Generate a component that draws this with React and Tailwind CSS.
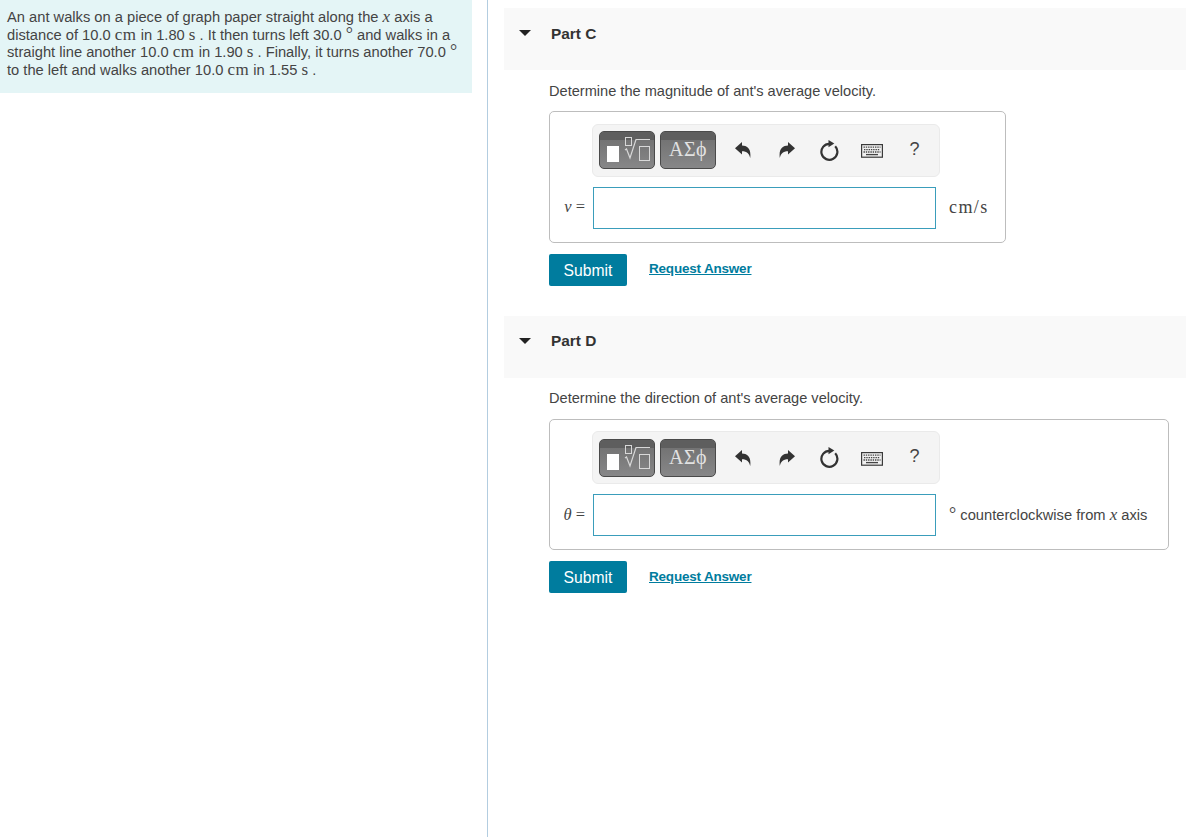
const serif = "font-['Liberation_Serif',serif]";

const Cm = () => <span className={`${serif} text-[17px] leading-[0] tracking-[0.5px]`}>cm</span>;
const Sec = () => <span className={`${serif} text-[17px] leading-[0]`}>s</span>;
const MathX = () => <span className={`${serif} italic text-[17px] leading-[0]`}>x</span>;
const Deg = () => <span className={`${serif} text-[18px] leading-[0]`}>°</span>;

const Undo = ({ flip }) => (
  <svg width="16" height="16" viewBox="0 0 16 16" className={flip ? "-scale-x-100" : ""}>
    <path d="M0 6.2L7 0v3.6C12.4 3.6 16.4 7 15.2 16 14.2 11.4 12 9.2 7 9.2v3.4z" fill="#333" />
  </svg>
);

const Reload = () => (
  <svg width="19" height="21" viewBox="0 0 19 21" fill="none">
    <path d="M15.2 6.3A8 8 0 1 1 9.5 3.8" stroke="#333" strokeWidth="2.2" />
    <path d="M8.5 0l5.8 3.6-5.8 3.6z" fill="#333" />
  </svg>
);

const Keyboard = () => (
  <svg width="22" height="14" viewBox="0 0 22 14">
    <rect x="0.6" y="0.6" width="20.8" height="12.6" fill="#f0f0f0" stroke="#3a3a3a" strokeWidth="1.2" />
    <path d="M2.5 3.2h17M3 5.6h16M2.5 8h17" stroke="#444" strokeWidth="1.3" strokeDasharray="1.4 0.9" />
    <path d="M5 10.6h12" stroke="#444" strokeWidth="1.3" />
  </svg>
);

const DarkButton = ({ children }) => (
  <div className="relative w-[56px] h-[38px] rounded-[5px] border border-[#4a4a4a] overflow-hidden bg-gradient-to-b from-[#6e6e6e] to-[#878788] flex items-center justify-center">
    <div className="absolute inset-x-0 top-0 h-[8px] bg-[#5e5e5e]" />
    {children}
  </div>
);

const Toolbar = () => (
  <div className="w-[348px] h-[53px] rounded-[6px] border border-[#eaeaea] bg-[#f4f4f4] flex items-center pl-[6px]">
    <DarkButton>
      <div className="relative w-full h-full">
        <div className="absolute left-[7px] top-[14px] w-[12px] h-[16px] bg-white" />
        <svg className="absolute left-[24px] top-[4px]" width="28" height="28" viewBox="0 0 28 28" fill="none">
          <rect x="1.5" y="1.5" width="6" height="8" stroke="#d8d8d8" strokeWidth="1" />
          <path d="M1 14l1.5-1 3.5 9 6-18.5h14" stroke="#d8d8d8" strokeWidth="1.2" />
          <rect x="15.5" y="10.5" width="10" height="14" stroke="#d8d8d8" strokeWidth="1" />
        </svg>
      </div>
    </DarkButton>
    <div className="w-[5px]" />
    <DarkButton>
      <span className="relative top-[-1px] font-['Liberation_Serif',serif] text-[20px] tracking-[0.5px] text-[#e2e2e2]">ΑΣϕ</span>
    </DarkButton>
    <div className="ml-[5px] flex items-center">
      <div className="w-[44px] flex justify-center"><Undo /></div>
      <div className="w-[44px] flex justify-center"><Undo flip /></div>
      <div className="w-[41px] flex justify-center"><Reload /></div>
      <div className="w-[44px] flex justify-center pt-[2px]"><Keyboard /></div>
      <div className="w-[41px] flex justify-center text-[18px] leading-none pb-[3px] text-[#444]">?</div>
    </div>
  </div>
);

const Part = ({ name, question, boxWidth, label, units }) => (
  <section className="mb-[30.2px]">
    <div className="relative h-[62px] bg-[#f9f9f9] pl-[47px] pt-[15.5px]">
      <div className="absolute left-[15px] top-[22px] w-0 h-0 border-x-[6px] border-x-transparent border-t-[6px] border-t-[#222]" />
      <h2 className="text-[15.4px] leading-[20px] font-bold text-[#333]">{name}</h2>
    </div>
    <div className="pl-[45px]">
      <p className="mt-[10.6px] text-[14.6px] leading-[20px] text-[#444]">{question}</p>
      <div className={`mt-[10.8px] ${boxWidth} rounded-[5px] border border-[#bdbdbd] pt-[11.2px] pb-[13px]`}>
        <div className="ml-[42px]"><Toolbar /></div>
        <div className="mt-[10px] flex items-center">
          <div className={`w-[43px] pr-[8px] text-right text-[#444] text-[16.5px] whitespace-nowrap ${serif}`}>{label}</div>
          <div className="w-[343px] h-[42px] border border-[#3a9dbb] bg-white" />
          <div className="ml-[13px] text-[14.7px] text-[#444] whitespace-nowrap">{units}</div>
        </div>
      </div>
      <div className="mt-[11px] flex items-center">
        <button className="w-[78px] h-[32px] pt-[1.4px] rounded-[2px] bg-[#007c9e] text-white text-[15.7px]">Submit</button>
        <a className="ml-[22px] text-[13.5px] tracking-[-0.2px] font-bold text-[#007c9e] underline">Request Answer</a>
      </div>
    </div>
  </section>
);

export default function App() {
  return (
    <div className="flex w-[1200px] min-h-[837px] bg-white font-['Liberation_Sans',sans-serif]">
      <aside className="w-[488px] shrink-0 border-r border-[#b3cde0]">
        <div className="w-[472px] h-[93px] bg-[#e4f5f6] pl-[7px] pt-[9px] text-[14.7px] leading-[17.6px] text-[#444]">
          <p>An ant walks on a piece of graph paper straight along the <MathX /> axis a</p>
          <p>distance of 10.0 <Cm /> in 1.80 <Sec /> . It then turns left 30.0 <Deg /> and walks in a</p>
          <p>straight line another 10.0 <Cm /> in 1.90 <Sec /> . Finally, it turns another 70.0 <Deg /></p>
          <p>to the left and walks another 10.0 <Cm /> in 1.55 <Sec /> .</p>
        </div>
      </aside>
      <main className="flex-1 pl-4 pr-[14px] pt-2">
        <Part
          name="Part C"
          question="Determine the magnitude of ant's average velocity."
          boxWidth="w-[457px]"
          label={<span><i>v</i> =</span>}
          units={<span className={`${serif} text-[18px] tracking-[1.4px]`}>cm/s</span>}
        />
        <Part
          name="Part D"
          question="Determine the direction of ant's average velocity."
          boxWidth="w-[620px]"
          label={<span><i>θ</i> =</span>}
          units={<span><Deg /> counterclockwise from <MathX /> axis</span>}
        />
      </main>
    </div>
  );
}
